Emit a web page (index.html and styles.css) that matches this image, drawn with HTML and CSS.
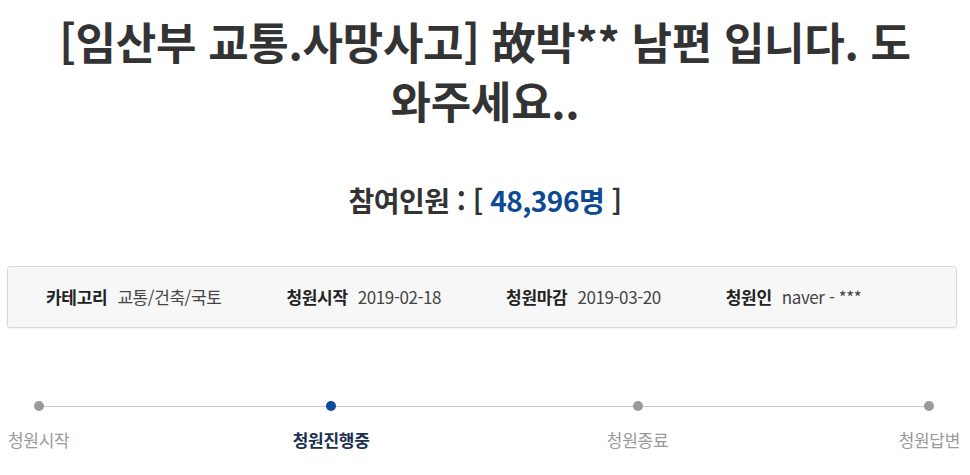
FILE: index.html
```html
<!DOCTYPE html>
<html lang="ko">
<head>
<meta charset="utf-8">
<link rel="stylesheet" href="styles.css">
</head>
<body>
<div class="page">
  <h1 class="title">[임산부 교통.사망사고] 故박** 남편 입니다. 도와주세요..</h1>
  <p class="count">참여인원 : [ <span class="num">48,396명</span> ]</p>
  <ul class="info">
    <li><span class="label">카테고리</span><span class="value">교통/건축/국토</span></li>
    <li><span class="label">청원시작</span><span class="value">2019-02-18</span></li>
    <li><span class="label">청원마감</span><span class="value">2019-03-20</span></li>
    <li><span class="label">청원인</span><span class="value">naver - ***</span></li>
  </ul>
  <ol class="steps">
    <li class="step"><span class="dot"></span><span class="step-label">청원시작</span></li>
    <li class="step active"><span class="dot"></span><span class="step-label">청원진행중</span></li>
    <li class="step third"><span class="dot"></span><span class="step-label">청원종료</span></li>
    <li class="step"><span class="dot"></span><span class="step-label">청원답변</span></li>
  </ol>
</div>
</body>
</html>
```
FILE: styles.css
```css
html, body {
  margin: 0;
  padding: 0;
  background: #fff;
}
body {
  font-family: "Noto Sans CJK KR", "Noto Sans", sans-serif;
  color: #333;
}
.page {
  width: 970px;
  padding-top: 12px;
}
.title {
  width: 870px;
  margin: 0 auto;
  text-align: center;
  font-size: 44px;
  line-height: 59px;
  font-weight: 700;
  color: #333;
  letter-spacing: -0.3px;
}
.count {
  margin: 51px 0 0;
  text-align: center;
  font-size: 28px;
  line-height: 38px;
  font-weight: 700;
  color: #333;
  letter-spacing: -0.5px;
}
.count .num {
  color: #0e4a92;
}
.info {
  list-style: none;
  margin: 47px 0 0 7px;
  width: 950px;
  height: 62px;
  box-sizing: border-box;
  padding: 0 0 0 38px;
  display: flex;
  align-items: center;
  gap: 65px;
  background: #f7f7f7;
  border: 1px solid #d9d9d9;
  border-radius: 3px;
  box-shadow: 0 1px 2px rgba(0,0,0,0.06);
}
.info li {
  display: flex;
  align-items: center;
  gap: 10px;
  font-size: 17px;
  line-height: 24px;
}
.label {
  font-weight: 700;
  color: #222;
  letter-spacing: -0.3px;
}
.value {
  color: #444;
  font-weight: 400;
  letter-spacing: -0.4px;
}
.steps {
  list-style: none;
  margin: 73px 0 0 8px;
  padding: 0;
  width: 952px;
  display: flex;
  justify-content: space-between;
  position: relative;
}
.steps::before {
  content: "";
  position: absolute;
  left: 30px;
  right: 32px;
  top: 5px;
  height: 1px;
  background: #c8c8c8;
}
.step {
  display: flex;
  flex-direction: column;
  align-items: center;
  gap: 17px;
  position: relative;
}
.step.active {
  margin-right: 14px;
}
.step.third {
  margin-right: 7px;
}
.dot {
  width: 10px;
  height: 10px;
  border-radius: 50%;
  background: #9a9a9a;
}
.step.active .dot {
  background: #0b4a9c;
}
.step-label {
  font-size: 17px;
  line-height: 24px;
  color: #999;
  letter-spacing: -0.3px;
}
.step.active .step-label {
  color: #1b2f52;
  font-weight: 700;
}
```
